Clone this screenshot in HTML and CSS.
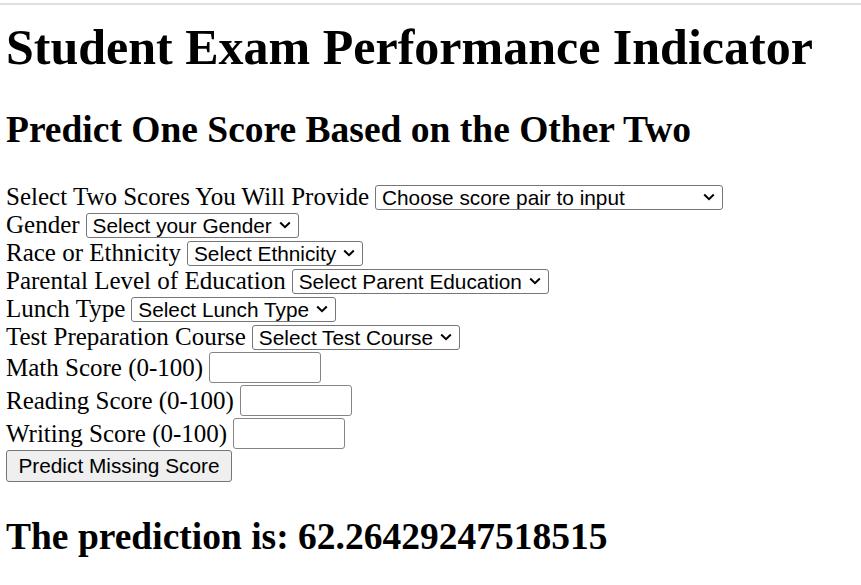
FILE: index.html
```html
<!DOCTYPE html>
<html>
<head>
<meta charset="utf-8">
<title>Student Exam Performance Indicator</title>
<link rel="stylesheet" href="styles.css">
</head>
<body>
<div class="topline"></div>
<div class="page">
  <h1 class="title">Student Exam Performance Indicator</h1>
  <h2 class="subtitle">Predict One Score Based on the Other Two</h2>
  <form class="form">
    <div class="row"><label>Select Two Scores You Will Provide</label><select class="sel sel-pair"><option>Choose score pair to input</option></select></div>
    <div class="row"><label>Gender</label><select class="sel"><option>Select your Gender</option></select></div>
    <div class="row"><label>Race or Ethnicity</label><select class="sel"><option>Select Ethnicity</option></select></div>
    <div class="row"><label>Parental Level of Education</label><select class="sel"><option>Select Parent Education</option></select></div>
    <div class="row"><label>Lunch Type</label><select class="sel"><option>Select Lunch Type</option></select></div>
    <div class="row"><label>Test Preparation Course</label><select class="sel"><option>Select Test Course</option></select></div>
    <div class="row row-in"><label>Math Score (0-100)</label><input class="num" type="text"></div>
    <div class="row row-in"><label>Reading Score (0-100)</label><input class="num" type="text"></div>
    <div class="row row-in"><label>Writing Score (0-100)</label><input class="num" type="text"></div>
    <div class="row row-btn"><button type="button" class="btn">Predict Missing Score</button></div>
  </form>
  <h2 class="result">The prediction is: 62.26429247518515</h2>
</div>
</body>
</html>
```
FILE: styles.css
```css
html, body { margin: 0; padding: 0; background: #fff; }
body { font-family: "Liberation Serif", "Times New Roman", serif; font-size: 25px; color: #000; }
.topline { height: 2px; margin-top: 3px; background: #dedede; }
.page { padding: 0 6px; }
.title { font-size: 50px; font-weight: bold; margin: 13.6px 0 32.2px; line-height: 57px; }
.subtitle { font-size: 37.5px; font-weight: bold; margin: 0 0 32.7px; line-height: 43px; }
.form { margin: 0; }
.row { line-height: 28px; height: 28px; display: flex; align-items: center; gap: 6px; white-space: nowrap; }
.row-in { height: 33px; }
.row-btn { height: 32px; }
.sel {
  -webkit-appearance: none; appearance: none;
  font-family: "Liberation Sans", Arial, sans-serif; font-size: 20.8px; line-height: 23px;
  height: 25px; box-sizing: border-box;
  border: 1px solid #767676; border-radius: 3px; color: #000;
  padding: 0 25px 0 6px;
  background: #fff url("data:image/svg+xml;utf8,<svg xmlns='http://www.w3.org/2000/svg' width='12' height='8' viewBox='0 0 12 8'><polyline points='1.2,1.5 6,6.2 10.8,1.5' fill='none' stroke='black' stroke-width='2'/></svg>") no-repeat right 7px center;
}
.sel-pair { width: 348px; }
.num { width: 112px; height: 31px; box-sizing: border-box; border: 1px solid #858585; border-radius: 3px; padding: 0 3px; font-size: 20.8px; }
.btn { font-family: "Liberation Sans", Arial, sans-serif; font-size: 20.8px; height: 32px; width: 226px; padding: 0; border: 1px solid #767676; border-radius: 3px; background: #efefef; color: #000; }
.result { font-size: 37.5px; font-weight: bold; margin: 32.3px 0 0; line-height: 43px; }
```
